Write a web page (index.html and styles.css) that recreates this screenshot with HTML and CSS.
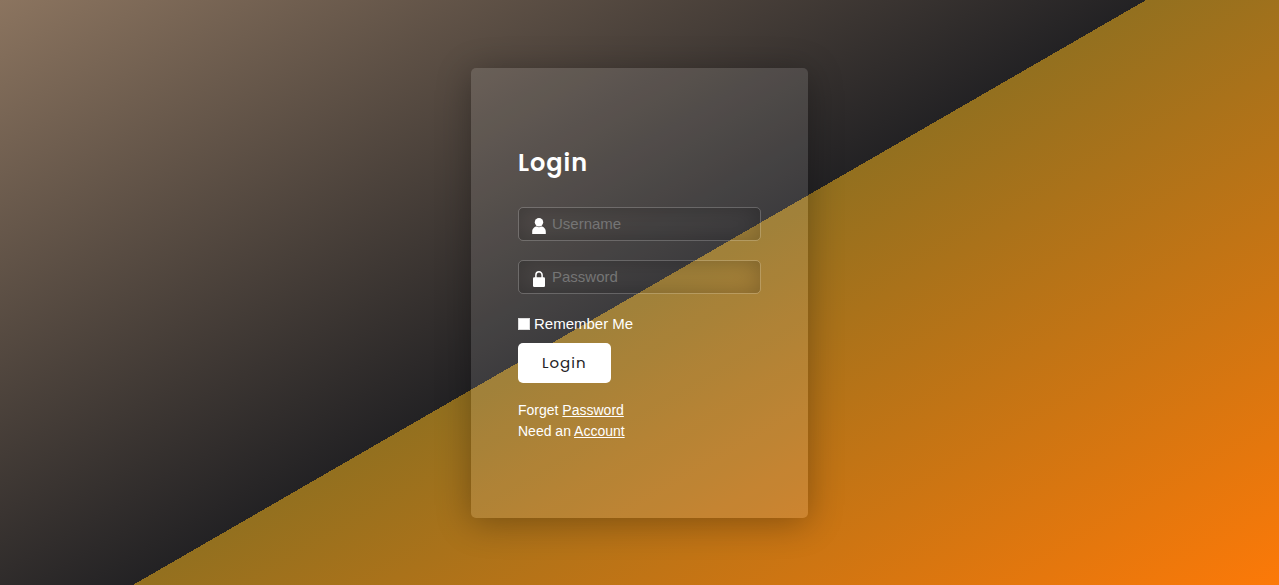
FILE: index.html
```html
<!DOCTYPE html>
<html lang="en">
<head>
<meta charset="utf-8">
<meta name="viewport" content="width=device-width, initial-scale=1">
<title>Login</title>
<link rel="stylesheet" href="styles.css">
</head>
<body class="page">
<main class="card">
  <form class="form">
    <h1 class="title">Login</h1>
    <div class="field">
      <label class="field-icon" for="username" aria-label="Username">
        <svg width="16" height="18" viewBox="0 0 16 18" aria-hidden="true"><circle cx="8" cy="5.2" r="4.2"/><path d="M1.2 17v-2.200C1.200 11.600 3.500 9.600 6 9.600c1.300.7 2.700.7 4 0 2.500 0 4.800 2 4.800 5.200V17z"/></svg>
      </label>
      <input class="input" id="username" type="text" placeholder="Username">
    </div>
    <div class="field">
      <label class="field-icon" for="password" aria-label="Password">
        <svg width="16" height="18" viewBox="0 0 16 18" aria-hidden="true"><path d="M4.900 8V5a3.100 3.300 0 0 1 6.200 0v3" fill="none" stroke="#fff" stroke-width="1.500"/><rect x="2" y="7.300" width="12" height="9.700" rx="1.200"/></svg>
      </label>
      <input class="input" id="password" type="password" placeholder="Password">
    </div>
    <label class="remember"><input class="check" type="checkbox"> Remember Me</label>
    <button class="button" type="submit">Login</button>
    <p class="note">Forget <a class="link" href="#password-reset">Password</a></p>
    <p class="note">Need an <a class="link" href="#register">Account</a></p>
  </form>
</main>
</body>
</html>
```
FILE: styles.css
```css
* {
  box-sizing: border-box;
  margin: 0;
}

.page {
  display: flex;
  align-items: center;
  justify-content: center;
  min-height: 100vh;
  background: linear-gradient(150deg, #8b745f 0%, #232224 50%, #93701f 50%, #fc7908 100%);
  color: #fff;
  font-family: "Liberation Sans", Arial, sans-serif;
}

.card {
  display: flex;
  align-items: center;
  width: 100%;
  max-width: 337px;
  min-height: 450px;
  padding: 42px 47px 40px;
  border-radius: 5px;
  background: rgba(255, 255, 255, 0.12);
  box-shadow: 0 5px 35px rgba(0, 0, 0, 0.3);
}

.form {
  display: flex;
  flex: 1;
  flex-direction: column;
  align-items: flex-start;
  min-width: 0;
}

.title {
  margin-bottom: 26px;
  font: 600 24px/36px Poppins, Inter, sans-serif;
  letter-spacing: 1px;
}

.field {
  display: flex;
  align-items: center;
  gap: 5px;
  width: 100%;
  height: 34px;
  margin-bottom: 19px;
  padding: 0 12px;
  border: 1px solid rgba(255, 255, 255, 0.2);
  border-radius: 5px;
  box-shadow: inset 0 0 25px rgba(0, 0, 0, 0.25);
}

.field-icon {
  display: flex;
  padding-top: 4px;
  fill: #fff;
}

.input {
  flex: 1;
  min-width: 0;
  padding: 0;
  border: 0;
  outline: 0;
  background: transparent;
  color: #fff;
  font: 15px/20px "Liberation Sans", Arial, sans-serif;
}

.input::placeholder {
  color: #757575;
}

.remember {
  display: flex;
  align-items: center;
  gap: 4px;
  margin-bottom: 8px;
  font-size: 15px;
  line-height: 22px;
}

.check {
  width: 12px;
  height: 12px;
  appearance: none;
  border: 1px solid #ddd;
  background: #fff;
}

.check:checked {
  background: #222;
}

.button {
  height: 40px;
  margin-bottom: 17px;
  padding: 0 24px;
  border: 0;
  border-radius: 5px;
  background: #fff;
  color: #232224;
  font: 400 15px/22px Poppins, Inter, sans-serif;
  letter-spacing: 1px;
}

.note {
  font-size: 14px;
  line-height: 21px;
}

.link {
  color: inherit;
}
```
